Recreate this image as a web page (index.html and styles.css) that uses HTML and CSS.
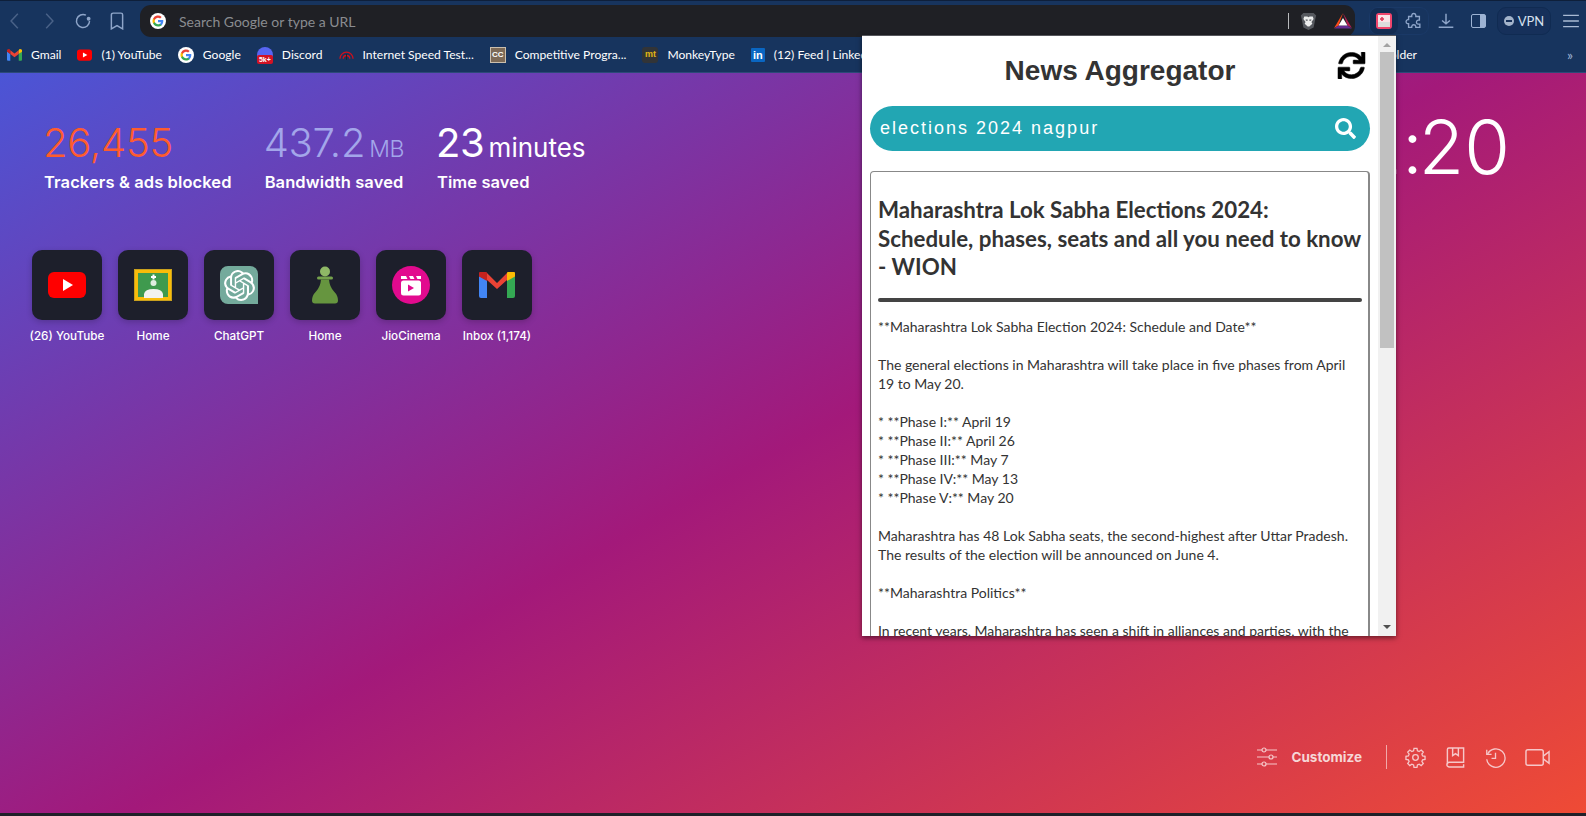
FILE: index.html
```html
<!DOCTYPE html>
<html lang="en">
<head>
<meta charset="utf-8">
<title>New Tab</title>
<link rel="stylesheet" href="styles.css">
</head>
<body>
<div class="browser">
  <header class="chrome">
    <div class="toolbar">
      <div class="nav">
        <button class="tb dim"><svg viewBox="0 0 16 16"><path d="M10.500 1.500 4.500 8l6 6.500"/></svg></button>
        <button class="tb dim"><svg viewBox="0 0 16 16"><path d="m5.500 1.500 6 6.500-6 6.500"/></svg></button>
        <button class="tb"><svg viewBox="0 0 16 16"><path d="M13.800 8A5.800 5.800 0 1 1 10.600 2.800"/><circle class="fill" cx="13" cy="6" r="1.700"/></svg></button>
        <button class="tb"><svg viewBox="0 0 16 16"><path d="M3 2.500a1.500 1.500 0 0 1 1.500-1.500h7A1.500 1.500 0 0 1 13 2.500v12.500L8 12l-5 3z"/></svg></button>
      </div>
      <div class="omnibox">
        <span class="g-badge"><svg viewBox="0 0 24 24"><use href="#g-logo"/></svg></span>
        <span class="placeholder">Search Google or type a URL</span>
        <span class="omni-sep"></span>
        <svg class="brave" viewBox="0 0 20 22"><path fill="#55585e" d="M4 1h12l3 3-1 4-2 10-6 3-6-3L2 8 1 4z"/><path fill="#eceded" d="M5 5h3.500L10 6l1.500-1H15l1 3-2.500 3.500 1 2L11 17h-2l-3.500-3.500 1-2L4 8z"/><path fill="#55585e" d="M6.500 8.500h2.500v1.500H7zM11 8.500h2.500l-.5 1.500h-2z"/></svg>
        <svg class="bat" viewBox="0 0 20 18"><path fill="#ff4a17" d="M10 0 0 17l5-3z"/><path fill="#b0204f" d="M10 0l10 17-5-3z"/><path fill="#662d91" d="M0 17.500h20l-5-3.500H5z"/><path fill="#fff" d="M10 5.500l5 8.500H5z"/></svg>
      </div>
      <div class="ext-pill">
        <span class="ext-first"><span class="ext-red"><span class="ext-red-in"></span></span></span>
        <svg class="ext-puzzle" viewBox="0 0 20 20"><path d="M7.500 3.500a2.300 2.300 0 0 1 4.500 0V5h4v4h-1.500a2.300 2.300 0 0 0 0 4.500H16.500V17h-4.500v-1a2.300 2.300 0 0 0-4.500 0v1H4v-4H3a2.300 2.300 0 0 1 0-4.500h1V5h3.500z"/></svg>
      </div>
      <button class="tb"><svg viewBox="0 0 16 16"><path d="M8 1.500v9M4.500 7.500 8 10.500 11.500 7.500M1.500 13.500H14.500"/></svg></button>
      <span class="sidebar-ico"><span class="side-fill"></span></span>
      <div class="vpn"><span class="vpn-dot"></span>VPN</div>
      <button class="tb menu"><svg viewBox="0 0 16 16"><path d="M1 3h14M1 8h14M1 13h14"/></svg></button>
    </div>
    <nav class="bookmarks">
      <a class="bm"><svg class="bi" viewBox="0 0 16 12"><path fill="#4285f4" d="M0 2v9a1 1 0 0 0 1 1h2.500V5z"/><path fill="#34a853" d="M16 2v9a1 1 0 0 1-1 1h-2.500V5z"/><path fill="#ea4335" d="M3.500 5 8 8.500 12.500 5V1L8 4.500 3.500 1z"/><path fill="#c5221f" d="M0 2a1.500 1.500 0 0 1 3.500-1v4L0 2.500z"/><path fill="#fbbc04" d="M16 2a1.500 1.500 0 0 0-3.500-1v4L16 2.500z"/></svg>Gmail</a>
      <a class="bm"><svg class="bi" viewBox="0 0 16 12"><rect width="16" height="12" rx="3" fill="#f00"/><path fill="#fff" d="M6.300 3.300v5.400L11 6z"/></svg>(1) YouTube</a>
      <a class="bm"><span class="g-badge small"><svg viewBox="0 0 24 24"><use href="#g-logo"/></svg></span>Google</a>
      <a class="bm"><span class="discord"><span class="k5">5k+</span></span>Discord</a>
      <a class="bm"><svg class="bi" viewBox="0 0 16 12"><g fill="none" stroke="#d0101c" stroke-width="1.400"><path d="M1 10a7 7 0 0 1 14 0"/><path d="M4.500 10a3.500 3.500 0 0 1 7 0"/></g><path fill="#222" d="M7.500 5h1v6h-1z"/></svg>Internet Speed Test...</a>
      <a class="bm"><span class="cc">CC</span>Competitive Progra...</a>
      <a class="bm"><span class="mt">mt</span>MonkeyType</a>
      <a class="bm"><span class="li">in</span>(12) Feed | LinkedIn</a>
      <a class="bm folder">New folder</a>
      <span class="more">»</span>
    </nav>
  </header>

  <main class="ntp">
    <div class="ntp-top">
      <div class="ntp-left">
        <section class="stats">
          <div class="stat"><div class="num orange">26,455</div><div class="lbl">Trackers &amp; ads blocked</div></div>
          <div class="stat"><div class="num lilac">437.2<span class="unit">MB</span></div><div class="lbl">Bandwidth saved</div></div>
          <div class="stat"><div class="num bright">23<span class="unit wide">minutes</span></div><div class="lbl">Time saved</div></div>
        </section>
        <section class="tiles">
          <a class="tile"><span class="tile-box"><svg viewBox="0 0 38 26" class="ti-yt"><rect width="38" height="26" rx="6" fill="#f00"/><path fill="#fff" d="M15 7v12l10-6z"/></svg></span><span class="tile-lbl">(26) YouTube</span></a>
          <a class="tile"><span class="tile-box"><svg viewBox="0 0 38 32" class="ti-cl"><rect width="38" height="32" fill="#c9a01e"/><rect x="1" y="1" width="36" height="30" fill="#f9bc0a"/><rect x="4" y="4" width="30" height="24" fill="#3f9a4e"/><path fill="#fff" d="M17 7h1.500V5.500h2V7H22v2h-1.500v1.500h-2V9H17z"/><circle cx="19.500" cy="14" r="3" fill="#dfeee0"/><path fill="#f2f2ee" d="M10 29v-4q1-5 9.500-5t9.500 5v4z"/></svg></span><span class="tile-lbl">Home</span></a>
          <a class="tile"><span class="tile-box"><span class="ti-gpt"><svg viewBox="0 0 24 24"><path fill="#fff" d="M22.2819 9.8211a5.9847 5.9847 0 0 0-.5157-4.9108 6.0462 6.0462 0 0 0-6.5098-2.9A6.0651 6.0651 0 0 0 4.9807 4.1818a5.9847 5.9847 0 0 0-3.9977 2.9 6.0462 6.0462 0 0 0 .7427 7.0966 5.98 5.98 0 0 0 .511 4.9107 6.051 6.051 0 0 0 6.5146 2.9001A5.9847 5.9847 0 0 0 13.2599 24a6.0557 6.0557 0 0 0 5.7718-4.2058 5.9894 5.9894 0 0 0 3.9977-2.9001 6.0557 6.0557 0 0 0-.7475-7.0729zm-9.022 12.6081a4.4755 4.4755 0 0 1-2.8764-1.0408l.1419-.0804 4.7783-2.7582a.7948.7948 0 0 0 .3927-.6813v-6.7369l2.02 1.1686a.071.071 0 0 1 .038.052v5.5826a4.504 4.504 0 0 1-4.4945 4.4944zm-9.6607-4.1254a4.4708 4.4708 0 0 1-.5346-3.0137l.142.0852 4.783 2.7582a.7712.7712 0 0 0 .7806 0l5.8428-3.3685v2.3324a.0804.0804 0 0 1-.0332.0615L9.74 19.9502a4.4992 4.4992 0 0 1-6.1408-1.6464zM2.3408 7.8956a4.485 4.485 0 0 1 2.3655-1.9728V11.6a.7664.7664 0 0 0 .3879.6765l5.8144 3.3543-2.0201 1.1685a.0757.0757 0 0 1-.071 0l-4.8303-2.7865A4.504 4.504 0 0 1 2.3408 7.872zm16.5963 3.8558L13.1038 8.364 15.1192 7.2a.0757.0757 0 0 1 .071 0l4.8303 2.7913a4.4944 4.4944 0 0 1-.6765 8.1042v-5.6772a.79.79 0 0 0-.407-.667zm2.0107-3.0231l-.142-.0852-4.7735-2.7818a.7759.7759 0 0 0-.7854 0L9.409 9.2297V6.8974a.0662.0662 0 0 1 .0284-.0615l4.8303-2.7866a4.4992 4.4992 0 0 1 6.6802 4.66zM8.3065 12.863l-2.02-1.1638a.0804.0804 0 0 1-.038-.0567V6.0742a4.4992 4.4992 0 0 1 7.3757-3.4537l-.142.0805L8.704 5.459a.7948.7948 0 0 0-.3927.6813zm1.0976-2.3654l2.602-1.4998 2.6069 1.4998v2.9994l-2.5974 1.4997-2.6067-1.4997Z"/></svg></span></span><span class="tile-lbl">ChatGPT</span></a>
          <a class="tile"><span class="tile-box"><svg viewBox="0 0 26 38" class="ti-pawn"><circle cx="13" cy="5.500" r="5" fill="#8fb866"/><rect x="5" y="10.500" width="16" height="3" rx="1.500" fill="#75a24c"/><path fill="#66953f" d="M9 13.500h8q.5 7 5 12 4 4 4 9 0 3-3 3H3q-3 0-3-3 0-5 4-9 4.500-5 5-12z"/></svg></span><span class="tile-lbl">Home</span></a>
          <a class="tile"><span class="tile-box"><svg viewBox="0 0 38 38" class="ti-jio"><circle cx="19" cy="19" r="19" fill="#e20a8e"/><path fill="#fff" d="M9 10h5l1.500 3H9zM17 10h4l1.500 3h-4zM24 10h5v3h-3.500z"/><rect x="9" y="14.500" width="20" height="15" rx="2.500" fill="#fff"/><path fill="#e20a8e" d="M16 18.500v7l6-3.500z"/></svg></span><span class="tile-lbl">JioCinema</span></a>
          <a class="tile"><span class="tile-box"><svg viewBox="0 0 36 26" class="ti-gm"><path fill="#4285f4" d="M0 4v20a2 2 0 0 0 2 2h6V8z"/><path fill="#34a853" d="M36 4v20a2 2 0 0 1-2 2h-6V8z"/><path fill="#ea4335" d="M8 8 18 17 28 8V1L18 11 8 1z"/><path fill="#c5221f" d="M0 4a3.500 3.500 0 0 1 8-3v8L0 4.500z"/><path fill="#fbbc04" d="M36 4a3.500 3.500 0 0 0-8-3v8l8-4.500z"/></svg></span><span class="tile-lbl">Inbox (1,174)</span></a>
        </section>
      </div>
      <div class="clock">2<span class="colon">:</span>20</div>
    </div>
    <footer class="ntp-foot">
      <button class="cust"><svg viewBox="0 0 20 20" class="fi"><path d="M0 3h20M0 10h20M0 17h20"/><circle cx="7" cy="3" r="2" class="dotfill"/><circle cx="14" cy="10" r="2" class="dotfill"/><circle cx="7" cy="17" r="2" class="dotfill"/></svg><span>Customize</span></button>
      <span class="foot-sep"></span>
      <svg viewBox="0 0 24 24" class="fa"><circle cx="12" cy="12" r="3.200"/><path d="M10.300 1.500h3.400l.5 2.800 2 .8 2.300-1.600 2.400 2.400-1.600 2.300.8 2 2.800.5v3.400l-2.800.5-.8 2 1.600 2.300-2.400 2.400-2.300-1.600-2 .8-.5 2.800h-3.400l-.5-2.800-2-.8-2.300 1.600-2.400-2.400 1.600-2.300-.8-2-2.800-.5v-3.400l2.800-.5.8-2-1.600-2.300 2.400-2.400 2.300 1.600 2-.8z"/></svg>
      <svg viewBox="0 0 20 22" class="fa"><path d="M1.500 18V2.500a1.500 1.500 0 0 1 1.500-1.500h15.500v15H3.500a2.500 2.500 0 0 0 0 5h15v-3"/><path d="M7 1v8l3-2 3 2V1"/></svg>
      <svg viewBox="0 0 24 24" class="fa"><path d="M3 8a10.500 10.500 0 1 1-1 6"/><path d="M2 3v5.500h5.500"/><path d="M12 6.500V13H7.500"/></svg>
      <svg viewBox="0 0 26 20" class="fa wide"><rect x="1" y="2" width="18" height="16" rx="2"/><path d="M19 8.500 25 4v12l-6-4.500"/></svg>
    </footer>
  </main>
  <div class="strip"></div>

  <aside class="popup">
    <div class="pop-main">
      <div class="pop-head">
        <h1 class="pop-title">News Aggregator</h1>
        <svg class="refresh" viewBox="0 0 512 512"><path d="M440.65 12.57l4 82.77A247.16 247.16 0 0 0 255.83 8C134.73 8 33.91 94.92 12.29 209.82A12 12 0 0 0 24.09 224h49.05a12 12 0 0 0 11.67-9.26 175.91 175.91 0 0 1 317-56.94l-101.46-4.86a12 12 0 0 0-12.57 12v47.41a12 12 0 0 0 12 12H500a12 12 0 0 0 12-12V12a12 12 0 0 0-12-12h-47.37a12 12 0 0 0-11.98 12.57zM255.83 432a175.61 175.61 0 0 1-146-77.8l101.8 4.87a12 12 0 0 0 12.57-12v-47.4a12 12 0 0 0-12-12H12a12 12 0 0 0-12 12V500a12 12 0 0 0 12 12h47.35a12 12 0 0 0 12-12.6l-4.15-82.57A247.17 247.17 0 0 0 255.83 504c121.11 0 221.93-86.92 243.55-201.82a12 12 0 0 0-11.8-14.18h-49.05a12 12 0 0 0-11.67 9.26A175.86 175.86 0 0 1 255.83 432z"/></svg>
      </div>
      <div class="search">
        <span class="search-text">elections 2024 nagpur</span>
        <svg class="search-ico" viewBox="0 0 512 512"><path d="M505 442.7L405.3 343c-4.500-4.500-10.600-7-17-7H372c27.600-35.300 44-79.700 44-128C416 93.100 322.900 0 208 0S0 93.100 0 208s93.100 208 208 208c48.300 0 92.700-16.400 128-44v16.300c0 6.400 2.500 12.500 7 17l99.700 99.700c9.400 9.400 24.600 9.400 33.900 0l28.300-28.300c9.400-9.400 9.400-24.600.1-34zM208 336c-70.700 0-128-57.200-128-128 0-70.700 57.200-128 128-128 70.700 0 128 57.200 128 128 0 70.700-57.200 128-128 128z"/></svg>
      </div>
      <article class="news">
        <h2 class="news-title">Maharashtra Lok Sabha Elections 2024: Schedule, phases, seats and all you need to know - WION</h2>
        <hr class="news-rule">
        <p>**Maharashtra Lok Sabha Election 2024: Schedule and Date**</p>
        <p>The general elections in Maharashtra will take place in five phases from April 19 to May 20.</p>
        <p>* **Phase I:** April 19<br>* **Phase II:** April 26<br>* **Phase III:** May 7<br>* **Phase IV:** May 13<br>* **Phase V:** May 20</p>
        <p>Maharashtra has 48 Lok Sabha seats, the second-highest after Uttar Pradesh. The results of the election will be announced on June 4.</p>
        <p>**Maharashtra Politics**</p>
        <p>In recent years, Maharashtra has seen a shift in alliances and parties, with the</p>
      </article>
    </div>
    <div class="scrollbar">
      <span class="arrow up"></span>
      <span class="thumb"></span>
      <span class="arrow down"></span>
    </div>
  </aside>
</div>
<svg class="defs" aria-hidden="true"><defs><symbol id="g-logo" viewBox="0 0 24 24"><path fill="#4285f4" d="M22.600 12.200c0-.8-.1-1.500-.2-2.200H12v4.300h5.900a5 5 0 0 1-2.200 3.300v2.800h3.600c2.100-1.900 3.300-4.800 3.300-8.200z"/><path fill="#34a853" d="M12 23c3 0 5.500-1 7.300-2.700l-3.600-2.800c-1 .7-2.200 1.100-3.700 1.100-2.800 0-5.200-1.900-6.100-4.500H2.200v2.800A11 11 0 0 0 12 23z"/><path fill="#fbbc05" d="M5.900 14.100a6.600 6.600 0 0 1 0-4.200V7.100H2.200a11 11 0 0 0 0 9.800z"/><path fill="#ea4335" d="M12 5.400c1.600 0 3 .6 4.100 1.600l3.200-3.200A11 11 0 0 0 2.200 7.100l3.700 2.800C6.800 7.300 9.200 5.400 12 5.400z"/></symbol></defs></svg>
</body>
</html>
```

FILE: styles.css
```css
* { box-sizing: border-box; }
html, body { margin: 0; height: 100%; overflow: hidden; }
body { font-family: Lato, "Open Sans", "Liberation Sans", sans-serif; background: #1f2028; }
button { background: none; border: 0; padding: 0; color: inherit; font: inherit; }
.defs { width: 0; height: 0; position: absolute; }

.browser { position: relative; width: 1586px; height: 816px; display: flex; flex-direction: column; }

/* Browser chrome */
.chrome { height: 73px; flex: none; background: #17345e; border-top: 1px solid #0e1f3a; border-bottom: 1px solid #2c4a78; display: flex; flex-direction: column; }
.toolbar { height: 36px; display: flex; align-items: center; padding-top: 4px; }
.nav { display: flex; width: 142px; flex: none; margin-left: -2px; }
.nav .tb { width: 34px; }
.tb { width: 34px; height: 32px; display: flex; align-items: center; justify-content: center; flex: none; }
.tb svg { width: 18px; height: 18px; fill: none; stroke: #8ea5c9; stroke-width: 1.3; }
.tb svg .fill { fill: #8ea5c9; stroke: none; }
.tb.dim svg { stroke: #4a6288; }
.tb.menu { margin-left: 3px; }
.tb.menu svg { stroke: #a9bad4; }
.omnibox { width: 1215px; height: 32px; flex: none; background: #1f2025; border-radius: 11px; display: flex; align-items: center; padding: 0 3px 0 10px; }
.g-badge { width: 16px; height: 16px; background: #fff; border-radius: 50%; display: flex; align-items: center; justify-content: center; flex: none; }
.g-badge svg { width: 12px; height: 12px; }
.placeholder { margin-left: 13px; font-size: 14px; color: #8a8c90; flex: 1; }
.omni-sep { width: 1px; height: 16px; background: #b8babd; }
.brave { width: 17px; height: 19px; margin-left: 11px; }
.bat { width: 18px; height: 16px; margin-left: 17px; }
.ext-pill { margin-left: 14px; width: 60px; height: 28px; border-radius: 9px; border: 1px solid #1a3967; display: flex; align-items: center; flex: none; }
.ext-first { width: 28px; height: 26px; border-radius: 8px; background: #132c52; display: flex; align-items: center; justify-content: center; flex: none; }
.ext-red { width: 16px; height: 16px; border-radius: 3px; background: #f0456c; display: flex; align-items: center; justify-content: center; }
.ext-red-in { width: 12px; height: 12px; background: radial-gradient(circle at 4px 4px, #e2405f 1.500px, transparent 2px), linear-gradient(#fbe3e7 55%, #dcdcdc 55%); }
.ext-puzzle { width: 18px; height: 18px; margin-left: 7px; fill: none; stroke: #8ea5c9; stroke-width: 1.500; }
.sidebar-ico { width: 15px; height: 14px; border: 1.500px solid #9db3d3; border-radius: 2px; margin: 0 0 0 8px; display: flex; justify-content: flex-end; flex: none; }
.side-fill { width: 5px; background: #9db3d3; }
.vpn { margin-left: 11px; width: 54px; height: 28px; border: 1px solid #102b52; border-radius: 9px; display: flex; align-items: center; justify-content: center; gap: 4px; color: #d7e0ee; font-size: 13px; flex: none; background: #16305a; }
.vpn-dot { width: 10px; height: 10px; border-radius: 50%; background: #a4b4cb; position: relative; }
.vpn-dot::after { content: ""; position: absolute; left: 2px; right: 2px; top: 4px; height: 2px; background: #16305a; }
.bookmarks { height: 36px; display: flex; align-items: center; padding-left: 7px; color: #fff; font-size: 12.100px; }
.bm { display: flex; align-items: center; gap: 9px; margin-right: 16px; white-space: nowrap; }
.bi { width: 15px; height: 12px; flex: none; }
.discord { width: 16px; height: 16px; background: #5865f2; border-radius: 50%; position: relative; flex: none; }
.k5 { position: absolute; left: 0; right: 0; bottom: -1px; height: 9px; background: #d31325; border-radius: 2px; font: 700 7px/9px "Liberation Sans", sans-serif; text-align: center; color: #fff; }
.cc { width: 16px; height: 16px; background: #7d6a57; border: 1px solid #cbbfae; font: 700 8px/14px "Liberation Sans", sans-serif; text-align: center; color: #fff; flex: none; }
.mt { width: 16px; height: 16px; background: #323437; border-radius: 3px; color: #e2b714; font: 700 9px/15px "Liberation Sans", sans-serif; text-align: center; flex: none; }
.li { width: 14px; height: 14px; background: #0a66c2; border-radius: 1px; color: #fff; font: 700 11px/14px "Liberation Sans", sans-serif; text-align: center; flex: none; }
.folder { margin-left: auto; margin-right: 0; }
.more { margin-left: 150px; margin-right: 13px; color: #9db3d3; font-size: 14px; }

/* New tab page */
.ntp { flex: 1; display: flex; flex-direction: column; color: #fff; font-family: Inter, "Noto Sans", sans-serif; background: linear-gradient(151deg, #4b55d6 0%, #a3197a 50%, #ef4b35 100%); min-height: 0; }
.ntp-top { flex: 1; display: flex; justify-content: space-between; }
.ntp-left { padding: 48px 0 0 32px; }
.stats { display: flex; gap: 33px; padding-left: 12px; }
.num { font-size: 40px; font-weight: 300; line-height: 44px; height: 44px; white-space: nowrap; letter-spacing: -.2px; margin-left: -1px; }
.orange { color: #ff5c2e; }
.lilac { color: #a3a6ea; }
.bright { font-weight: 400; }
.unit { font-size: 23px; margin-left: 4px; letter-spacing: -.5px; }
.unit.wide { font-size: 26px; letter-spacing: 0; }
.lbl { font-size: 16.500px; font-weight: 600; margin-top: 6px; line-height: 22px; white-space: nowrap; letter-spacing: .1px; }
.tiles { display: flex; gap: 16px; margin-top: 57px; }
.tile { width: 70px; display: flex; flex-direction: column; align-items: center; }
.tile-box { width: 70px; height: 70px; border-radius: 10px; background: #1d1f2b; display: flex; align-items: center; justify-content: center; box-shadow: 0 2px 6px rgba(0,0,0,.2); }
.tile-lbl { font-size: 11.700px; font-weight: 500; margin-top: 8px; line-height: 16px; white-space: nowrap; }
.ti-yt { width: 38px; height: 26px; }
.ti-cl { width: 38px; height: 32px; }
.ti-gpt { width: 38px; height: 38px; background: #74aa9c; border-radius: 8px 8px 0 8px; display: flex; align-items: center; justify-content: center; }
.ti-gpt svg { width: 31px; height: 31px; }
.ti-pawn { width: 26px; height: 38px; }
.ti-jio { width: 38px; height: 38px; }
.ti-gm { width: 36px; height: 26px; }
.clock { font-size: 74px; font-weight: 300; line-height: 1; padding: 37px 76px 0 0; }
.colon { letter-spacing: -4px; }
.ntp-foot { height: 50px; flex: none; margin-bottom: 31px; display: flex; align-items: center; justify-content: flex-end; padding-right: 36px; }
.cust { display: flex; align-items: center; gap: 14px; color: #f6d7d7; font-size: 13.500px; font-weight: 700; }
.fi { width: 20px; height: 20px; fill: none; stroke: #f6c7c9; stroke-width: 1.200; }
.dotfill { fill: #d8434f; }
.foot-sep { width: 1px; height: 24px; background: rgba(255,255,255,.55); margin: 0 18px 0 24px; }
.fa { width: 21px; height: 21px; fill: none; stroke: #f6c7c9; stroke-width: 1.500; margin-right: 19px; }
.fa.wide { width: 25px; margin-right: 0; }
.strip { height: 3px; flex: none; background: #1f2028; }

/* Popup */
.popup { position: absolute; left: 862px; top: 35px; width: 534px; height: 601px; background: #fff; display: flex; box-shadow: 0 2px 5px rgba(0,0,0,.5); border-top: 1px solid #55565c; overflow: hidden; }
.pop-main { width: 516px; flex: none; padding: 0 8px; overflow: hidden; }
.pop-head { position: relative; height: 70px; display: flex; align-items: center; justify-content: center; }
.pop-title { margin: 0; font: 700 28px/1 "Liberation Sans", sans-serif; color: #333; }
.refresh { position: absolute; right: 4px; top: 16px; width: 29px; height: 27px; fill: #000; stroke: #000; stroke-width: 10; }
.search { height: 45px; background: #22a6b3; border-radius: 23px; display: flex; align-items: center; justify-content: space-between; padding: 0 14px 0 10px; }
.search-text { font: 18px "Liberation Sans", sans-serif; letter-spacing: 2px; color: #fff; }
.search-ico { width: 21px; height: 21px; fill: #fff; }
.news { margin-top: 20px; border: 1px solid #888; border-right-width: 2px; border-radius: 4px; padding: 24px 6px 0 7px; color: #333; font-size: 14px; line-height: 19px; height: 500px; }
.news-title { margin: 0; font-size: 22.300px; line-height: 28.500px; font-weight: 700; }
.news-rule { height: 4px; border: 0; border-radius: 2px; background: #444; margin: 16px 0 15px; }
.news p { margin: 0 0 19px; }
.scrollbar { width: 18px; flex: none; background: #f1f1f1; display: flex; flex-direction: column; align-items: center; }
.arrow { width: 0; height: 0; border-left: 4px solid transparent; border-right: 4px solid transparent; flex: none; }
.arrow.up { border-bottom: 4px solid #a3a3a3; margin: 7px 0 5px; }
.arrow.down { border-top: 4px solid #505050; margin-top: auto; margin-bottom: 7px; }
.thumb { width: 14px; height: 296px; background: #c1c1c1; flex: none; }
```
